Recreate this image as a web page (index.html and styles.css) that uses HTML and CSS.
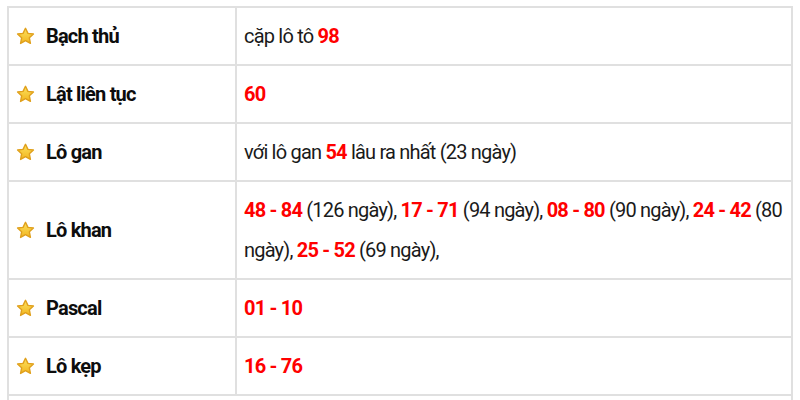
FILE: index.html
```html
<!DOCTYPE html>
<html lang="vi">
<head>
<meta charset="utf-8">
<link rel="stylesheet" href="styles.css">
</head>
<body>
<svg width="0" height="0" class="defs" aria-hidden="true">
  <defs>
    <linearGradient id="gold" x1="0" y1="0" x2="0" y2="1">
      <stop offset="0" stop-color="#fde25e"/>
      <stop offset="1" stop-color="#f1b51f"/>
    </linearGradient>
    <symbol id="star" viewBox="0 0 24 24">
      <path d="M12 1.6l3.1 6.4 6.9.9-5.1 4.8 1.3 7L12 17.3l-6.2 3.4 1.3-7L2 8.9l6.9-.9z" fill="url(#gold)" stroke="#e0a01c" stroke-width="1.8" stroke-linejoin="round"/>
    </symbol>
  </defs>
</svg>
<table class="stats">
  <tr>
    <th><span class="label"><svg class="star"><use href="#star"/></svg>Bạch thủ</span></th>
    <td>cặp lô tô <b class="num">98</b></td>
  </tr>
  <tr>
    <th><span class="label"><svg class="star"><use href="#star"/></svg>Lật liên tục</span></th>
    <td><b class="num">60</b></td>
  </tr>
  <tr>
    <th><span class="label"><svg class="star"><use href="#star"/></svg>Lô gan</span></th>
    <td>với lô gan <b class="num">54</b> lâu ra nhất (23 ngày)</td>
  </tr>
  <tr>
    <th><span class="label"><svg class="star"><use href="#star"/></svg>Lô khan</span></th>
    <td><b class="num">48 - 84</b> (126 ngày), <b class="num">17 - 71</b> (94 ngày), <b class="num">08 - 80</b> (90 ngày), <b class="num">24 - 42</b> (80 ngày), <b class="num">25 - 52</b> (69 ngày),</td>
  </tr>
  <tr>
    <th><span class="label"><svg class="star"><use href="#star"/></svg>Pascal</span></th>
    <td><b class="num">01 - 10</b></td>
  </tr>
  <tr>
    <th><span class="label"><svg class="star"><use href="#star"/></svg>Lô kẹp</span></th>
    <td><b class="num">16 - 76</b></td>
  </tr>
  <tr class="foot">
    <td colspan="2">&nbsp;</td>
  </tr>
</table>
</body>
</html>
```
FILE: styles.css
```css
html, body {
  background: #fff;
}
body {
  margin: 6px 7px;
  font-family: Roboto, "Noto Sans", sans-serif;
  font-size: 20px;
  letter-spacing: -0.8px;
  color: #1a1a1a;
}
.defs {
  position: absolute;
  width: 0;
  height: 0;
}
.stats {
  width: 786px;
  border-collapse: collapse;
  border: 2px solid #e0e0e0;
}
.stats th,
.stats td {
  border: 2px solid #e0e0e0;
  padding: 8px 7px;
  line-height: 40px;
  vertical-align: middle;
  text-align: left;
}
.stats th {
  width: 212px;
  font-weight: 700;
  color: #0d0d0d;
}
.label {
  display: flex;
  align-items: center;
  gap: 11px;
}
.star {
  width: 19px;
  height: 19px;
  flex: none;
}
.num {
  color: #ff0000;
  font-weight: 700;
}
```
